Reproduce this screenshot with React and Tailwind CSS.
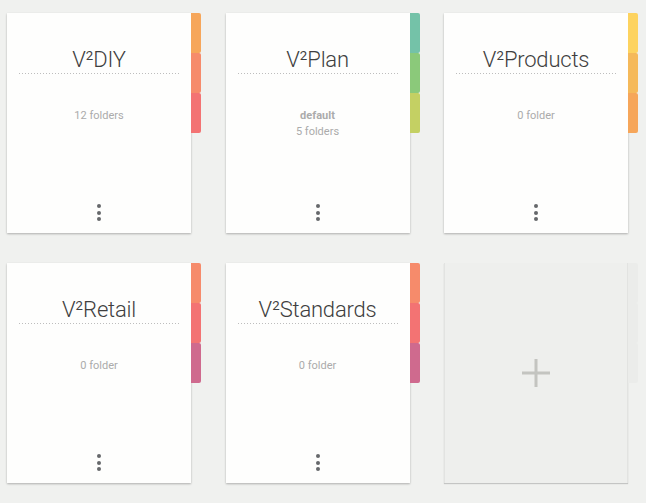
// Grille de classeurs : cartes blanches avec onglets colorés, plus une carte d'ajout.
const FOLDERS = [
  { name: "DIY", lines: [{ text: "12 folders" }], tabs: ["bg-[#f6a65a]", "bg-[#f68b6b]", "bg-[#f37373]"] },
  { name: "Plan", lines: [{ text: "default", bold: true }, { text: "5 folders" }], tabs: ["bg-[#74c2a8]", "bg-[#8bc97a]", "bg-[#c4d063]"] },
  { name: "Products", lines: [{ text: "0 folder" }], tabs: ["bg-[#fdd35f]", "bg-[#f5b95a]", "bg-[#f6a65a]"] },
  { name: "Retail", lines: [{ text: "0 folder" }], tabs: ["bg-[#f68b6b]", "bg-[#f37373]", "bg-[#cf6a8e]"] },
  { name: "Standards", lines: [{ text: "0 folder" }], tabs: ["bg-[#f68b6b]", "bg-[#f37373]", "bg-[#cf6a8e]"] },
];

function Tabs({ tabs }) {
  return (
    <div className="flex flex-col w-[10px]">
      {tabs.map((c, i) => (
        <div key={i} className={`h-10 rounded-r-[2px] ${c}`} />
      ))}
    </div>
  );
}

function FolderCard({ folder }) {
  return (
    <div className="flex">
      <div className="w-[184px] h-[220px] bg-[#fefefd] shadow-[0_1px_2px_rgba(0,0,0,0.28)] flex flex-col items-center pt-[34px] pb-3">
        <div className="w-[160px] text-center">
          <h2 className="text-[22px] leading-[26px] font-light text-[#3f3f3f] tracking-[-0.2px]">V²{folder.name}</h2>
          <div className="h-px bg-[linear-gradient(to_right,#bdbdbd_1px,transparent_1px)] bg-[length:3px_1px]" />
        </div>
        <div className="mt-[34px] text-[11px] leading-4 text-[#ababab] text-center">
          {folder.lines.map((l, i) => (
            <p key={i} className={l.bold ? "font-bold" : ""}>{l.text}</p>
          ))}
        </div>
        <div className="mt-auto flex flex-col gap-[2.5px]">
          <span className="w-1 h-1 rounded-full bg-[#66686b]" />
          <span className="w-1 h-1 rounded-full bg-[#66686b]" />
          <span className="w-1 h-1 rounded-full bg-[#66686b]" />
        </div>
      </div>
      <Tabs tabs={folder.tabs} />
    </div>
  );
}

function AddCard() {
  return (
    <div className="flex">
      <div className="w-[185px] h-[220px] bg-[#eeefed] border-x border-[#e2e3e1] shadow-[0_1px_1px_rgba(0,0,0,0.18)] flex items-center justify-center">
        <svg width="28" height="28" viewBox="0 0 28 28">
          <rect x="12.5" y="0" width="3" height="28" fill="#c3c4c0" />
          <rect x="0" y="12.5" width="28" height="3" fill="#c3c4c0" />
        </svg>
      </div>
      <div className="flex flex-col w-[10px]">
        <div className="h-10 rounded-r-[2px] bg-[#ebecea]" />
        <div className="h-10 rounded-r-[2px] bg-[#ebecea]" />
        <div className="h-10 rounded-r-[2px] bg-[#ebecea]" />
      </div>
    </div>
  );
}

export default function App() {
  return (
    <div className="w-[646px] h-[503px] bg-[#f0f1ef] pl-[7px] pt-[13px] font-['Roboto',sans-serif]">
      <div className="grid grid-cols-[194px_194px_194px] gap-x-[24.5px] gap-y-[30px]">
        {FOLDERS.map(f => (
          <FolderCard key={f.name} folder={f} />
        ))}
        <AddCard />
      </div>
    </div>
  );
}
